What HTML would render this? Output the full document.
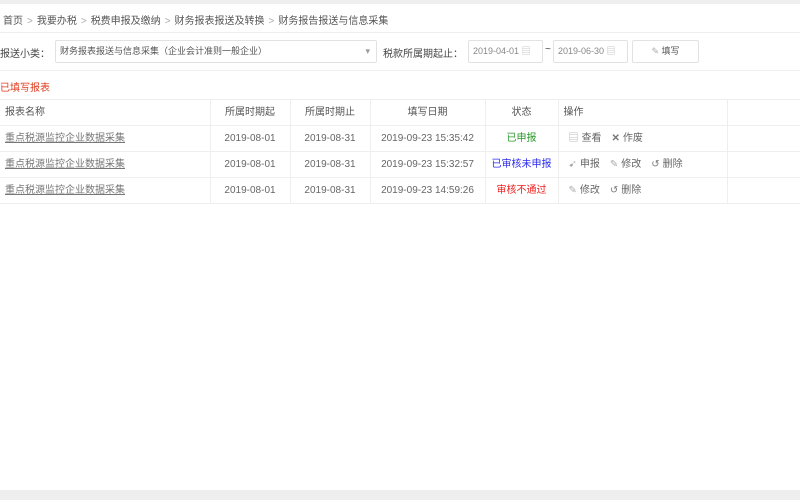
<!DOCTYPE html>
<html><head><meta charset="utf-8"><style>
*{margin:0;padding:0;box-sizing:border-box}
body{width:800px;height:500px;background:#fff;font-family:"Liberation Sans","Noto Sans CJK SC",sans-serif;font-size:10px;color:#555;position:relative;overflow:hidden}
.top{position:absolute;left:0;top:0;width:800px;height:4px;background:#eee}
.bot{position:absolute;left:0;top:490px;width:800px;height:10px;background:#eee}
.bc{position:absolute;left:3px;top:12px;font-size:10px;color:#555}
.bc span{color:#aaa;margin:0 4px}
.hl{position:absolute;left:0;width:800px;height:1px;background:#eee}
.lbl{position:absolute;top:45px;font-size:10px;color:#444}
.box{position:absolute;top:40px;height:23px;border:1px solid #e2e2e2;border-radius:2px;font-size:9px;color:#555;line-height:21px;padding-left:4px;background:#fff}
.red{position:absolute;left:0;top:79px;color:#e03a1c;font-size:10px}
table{position:absolute;left:0;top:99px;border-collapse:collapse;font-size:10px;line-height:12px}
td{height:26px;border:1px solid #eee;border-left:none;padding:0 5px;color:#666;white-space:nowrap;vertical-align:middle}
td.c{text-align:center}
tr.h td{color:#555;height:26px}
a{color:#777;text-decoration:underline}
.ic{color:#aaa;margin-right:3px;font-style:normal}
.op span{margin-right:10px}
</style></head><body>
<div class="top"></div>
<div class="bc">首页<span>&gt;</span>我要办税<span>&gt;</span>税费申报及缴纳<span>&gt;</span>财务报表报送及转换<span>&gt;</span>财务报告报送与信息采集</div>
<div class="hl" style="top:32px"></div>
<div class="lbl" style="left:0">报送小类：</div>
<div class="box" style="left:55px;width:322px">财务报表报送与信息采集（企业会计准则一般企业）<span style="position:absolute;right:6px;color:#999">▾</span></div>
<div class="lbl" style="left:383px">税款所属期起止：</div>
<div class="box" style="left:468px;width:75px;color:#888">2019-04-01 <span style="color:#bbb">▤</span></div>
<div class="lbl" style="left:545px;top:44px">~</div>
<div class="box" style="left:553px;width:75px;color:#888">2019-06-30 <span style="color:#bbb">▤</span></div>
<div class="box" style="left:632px;width:67px;text-align:center;padding:0"><span style="color:#aaa">✎</span> 填写</div>
<div class="hl" style="top:70px"></div>
<div class="red">已填写报表</div>
<table>
<tr class="h"><td style="width:210px">报表名称</td><td class="c" style="width:80px">所属时期起</td><td class="c" style="width:80px">所属时期止</td><td class="c" style="width:115px">填写日期</td><td class="c" style="width:73px">状态</td><td style="width:169px">操作</td><td style="width:73px;border-right:none"></td></tr>
<tr><td><a>重点税源监控企业数据采集</a></td><td class="c">2019-08-01</td><td class="c">2019-08-31</td><td class="c">2019-09-23 15:35:42</td><td class="c" style="color:#2a9a2a">已申报</td><td class="op" style="padding-left:10px"><span><i class="ic">▤</i>查看</span><span><b class="ic" style="color:#777">✕</b>作废</span></td><td style="border-right:none"></td></tr>
<tr><td><a>重点税源监控企业数据采集</a></td><td class="c">2019-08-01</td><td class="c">2019-08-31</td><td class="c">2019-09-23 15:32:57</td><td class="c" style="color:#2b2bef">已审核未申报</td><td class="op" style="padding-left:10px"><span><i class="ic">➹</i>申报</span><span><i class="ic">✎</i>修改</span><span><i class="ic" style="color:#777">↺</i>删除</span></td><td style="border-right:none"></td></tr>
<tr><td><a>重点税源监控企业数据采集</a></td><td class="c">2019-08-01</td><td class="c">2019-08-31</td><td class="c">2019-09-23 14:59:26</td><td class="c" style="color:#f02020">审核不通过</td><td class="op" style="padding-left:10px"><span><i class="ic">✎</i>修改</span><span><i class="ic" style="color:#777">↺</i>删除</span></td><td style="border-right:none"></td></tr>
</table>
<div class="bot"></div>
</body></html>
